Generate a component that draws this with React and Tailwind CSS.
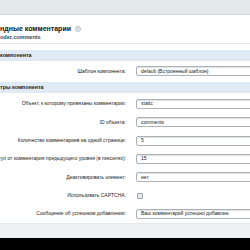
import React from "react";

const params = [
  { label: "Объект, к которому привязаны комментарии:", value: "static" },
  { label: "ID объекта:", value: "comments" },
  { label: "Количество комментариев на одной странице:", value: "5" },
  { label: "туп от комментария предыдущего уровня (в пикселях):", value: "15" },
  { label: "Деактивировать элемент:", value: "нет" },
  { label: "Использовать CAPTCHA:", checkbox: true },
  { label: "Сообщение об успешном добавлении:", value: "Ваш комментарий успешно добавлен." },
];

// Label column is right aligned, like the cropped original
const Label = ({ children }) => (
  <div className="w-[126px] shrink-0 flex justify-end">
    <span className="shrink-0 whitespace-nowrap text-[5px] text-[#222]">{children}</span>
  </div>
);

const Field = ({ value }) => (
  <div className="w-[130px] shrink-0 h-[10px] flex items-center pl-[4px] bg-white border border-[#aab2b9] rounded-[2px] shadow-[inset_0_1px_1px_rgba(0,0,0,0.12)] text-[5px] text-[#222] whitespace-nowrap overflow-hidden">
    {value}
  </div>
);

const Checkbox = () => (
  <div className="ml-[1px] w-[6px] h-[6px] border border-[#9aa3ab] rounded-[1px] bg-[#e9ecef]" />
);

const Row = ({ label, value, checkbox, className }) => (
  <div className={`flex items-center gap-[10px] ${className}`}>
    <Label>{label}</Label>
    {checkbox ? <Checkbox /> : <Field value={value} />}
  </div>
);

const SectionBand = ({ title }) => (
  <div className="h-[11px] bg-[#e0eaf5] flex items-center">
    <span className="text-[5.4px] font-bold text-[#222] whitespace-nowrap">{title}</span>
  </div>
);

export default function App() {
  return (
    <div className="w-[250px] h-[250px] overflow-hidden bg-white flex flex-col font-['Liberation_Sans',Arial,sans-serif]">
      {/* Top bar */}
      <div className="h-[15px] shrink-0 bg-[#e4eaec] border-b border-[#d4dbde]" />

      {/* Title */}
      <div className="mt-[9px] h-[10px] flex items-center gap-[4px]">
        <span className="text-[7px] font-bold text-[#111] whitespace-nowrap">ндные комментарии</span>
        <span className="w-[6px] h-[6px] rounded-full border border-[#b5bcc2] bg-[#f3f5f6] flex items-center justify-center text-[4px] font-bold text-[#8a939a] leading-none">
          i
        </span>
      </div>
      <div className="h-[6px] flex items-center">
        <span className="text-[5.5px] font-bold text-[#2c4a66] whitespace-nowrap">oder.comments</span>
      </div>
      <div className="mt-[3px] h-px bg-[#e3e8eb]" />

      {/* Template section */}
      <div className="mt-[6px]">
        <SectionBand title="компонента" />
      </div>
      <Row label="Шаблон компонента:" value="default (Встроенный шаблон)" className="h-[21px]" />

      {/* Params section */}
      <SectionBand title="тры компонента" />
      <div className="pt-[2px]">
        {params.map((p) => (
          <Row key={p.label} {...p} className="h-[18.3px]" />
        ))}
      </div>

      {/* Footer */}
      <div className="mt-auto h-[15px] shrink-0 bg-[#eef1f3] border-t border-[#e3e8eb]" />
      <div className="h-[12px] shrink-0 bg-black" />
    </div>
  );
}
